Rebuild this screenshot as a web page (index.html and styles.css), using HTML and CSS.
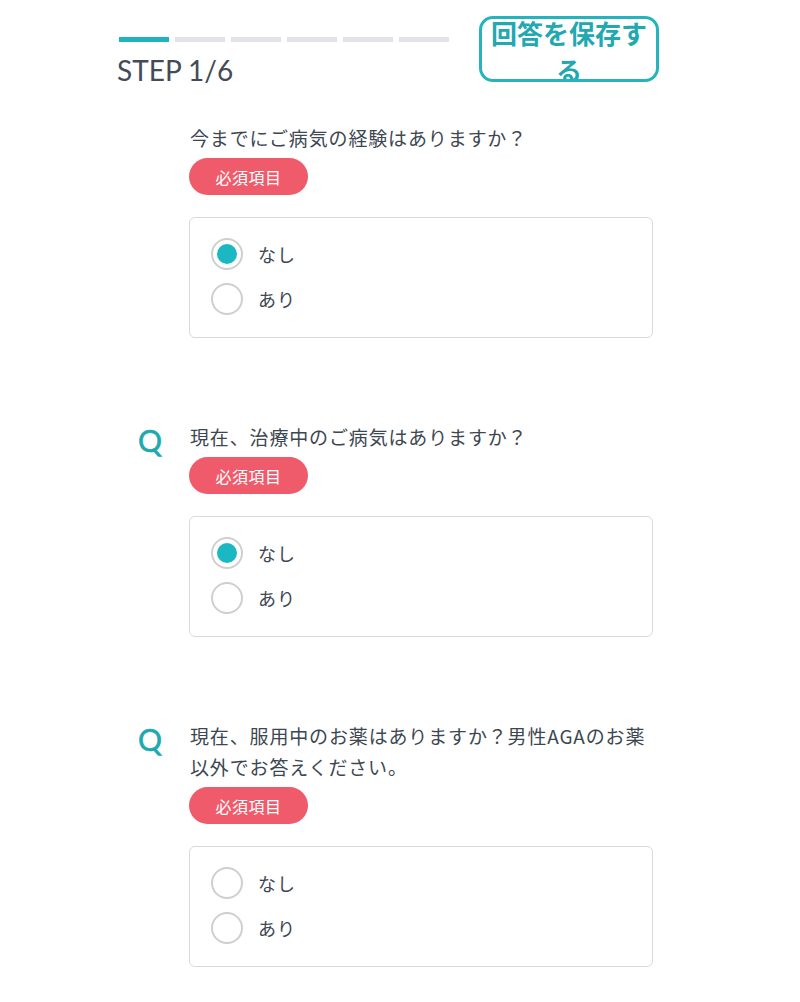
FILE: index.html
```html
<!DOCTYPE html>
<html lang="ja">
<head>
<meta charset="utf-8">
<title>STEP 1/6</title>
<link rel="stylesheet" href="styles.css">
</head>
<body>
<header class="header">
  <div class="progress-wrap">
    <div class="bars">
      <span class="bar active"></span>
      <span class="bar"></span>
      <span class="bar"></span>
      <span class="bar"></span>
      <span class="bar"></span>
      <span class="bar"></span>
    </div>
    <div class="step">STEP 1/6</div>
  </div>
  <button class="save-btn"><span>回答を保存する</span></button>
</header>

<main class="questions">
  <section class="question">
    <div class="q-mark"></div>
    <div class="q-body">
      <p class="q-text">今までにご病気の経験はありますか？</p>
      <span class="badge">必須項目</span>
      <div class="options">
        <label class="option"><span class="radio checked"></span><span class="opt-label">なし</span></label>
        <label class="option"><span class="radio"></span><span class="opt-label">あり</span></label>
      </div>
    </div>
  </section>

  <section class="question">
    <div class="q-mark">Q</div>
    <div class="q-body">
      <p class="q-text">現在、治療中のご病気はありますか？</p>
      <span class="badge">必須項目</span>
      <div class="options">
        <label class="option"><span class="radio checked"></span><span class="opt-label">なし</span></label>
        <label class="option"><span class="radio"></span><span class="opt-label">あり</span></label>
      </div>
    </div>
  </section>

  <section class="question">
    <div class="q-mark">Q</div>
    <div class="q-body">
      <p class="q-text">現在、服用中のお薬はありますか？男性AGAのお薬以外でお答えください。</p>
      <span class="badge">必須項目</span>
      <div class="options">
        <label class="option"><span class="radio"></span><span class="opt-label">なし</span></label>
        <label class="option"><span class="radio"></span><span class="opt-label">あり</span></label>
      </div>
    </div>
  </section>
</main>
</body>
</html>
```

FILE: styles.css
```css
* {
  box-sizing: border-box;
}

body {
  margin: 0;
  background: #ffffff;
  color: #3d4751;
  font-family: "Noto Sans CJK JP", "Noto Sans", sans-serif;
}

.header {
  display: flex;
  align-items: flex-start;
  padding: 16px 0 0 119px;
}

.progress-wrap {
  width: 330px;
  padding-top: 21px;
}

.bars {
  display: flex;
  gap: 6px;
}

.bar {
  display: block;
  width: 50px;
  height: 5px;
  background: #e2e2e9;
}

.bar.active {
  background: #1fb4bd;
}

.step {
  margin-top: 11px;
  margin-left: -2px;
  font-family: Lato, "Noto Sans", sans-serif;
  font-size: 28px;
  line-height: 34px;
  color: #434c56;
}

.save-btn {
  margin-left: 30px;
  width: 180px;
  height: 66px;
  padding: 0;
  border: 3px solid #25b4bd;
  border-radius: 14px;
  background: #ffffff;
  color: #22a8b0;
  font-family: "Noto Sans CJK JP", sans-serif;
  font-weight: 700;
  font-size: 26px;
  line-height: 37px;
  display: flex;
  align-items: center;
  justify-content: center;
  text-align: center;
  overflow: hidden;
}

.save-btn span {
  display: block;
  width: 100%;
  margin-top: 4px;
}

.questions {
  margin-top: 35px;
  padding-left: 138px;
}

.question {
  display: grid;
  grid-template-columns: 51px 470px;
}

.question + .question {
  margin-top: 83px;
}

.q-mark {
  font-family: Lato, "Noto Sans", sans-serif;
  font-size: 30px;
  line-height: 31px;
  padding-top: 4px;
  font-weight: 400;
  color: #1ea8b0;
  -webkit-text-stroke: 0.6px #1ea8b0;
}

.q-text {
  margin: 0;
  padding-left: 1px;
  font-size: 19px;
  line-height: 31px;
  letter-spacing: 0.85px;
  color: #3d4751;
}

.badge {
  display: flex;
  align-items: center;
  justify-content: center;
  margin-top: 5px;
  width: 119px;
  height: 37px;
  border-radius: 19px;
  background: #f05b6b;
  color: #ffffff;
  font-size: 16px;
  letter-spacing: 0.5px;
}

.options {
  margin-top: 22px;
  width: 464px;
  border: 1px solid #dadada;
  border-radius: 6px;
  padding: 20px 0 22px 21px;
  display: flex;
  flex-direction: column;
  gap: 13px;
}

.option {
  display: flex;
  align-items: center;
  gap: 15px;
  height: 32px;
}

.radio {
  width: 32px;
  height: 32px;
  border: 2px solid #cfcfcf;
  border-radius: 50%;
  display: flex;
  align-items: center;
  justify-content: center;
  flex: none;
}

.radio.checked::after {
  content: "";
  width: 20px;
  height: 20px;
  border-radius: 50%;
  background: #1bb8c4;
}

.opt-label {
  font-size: 18px;
  letter-spacing: 1px;
  color: #3d4751;
}
```
